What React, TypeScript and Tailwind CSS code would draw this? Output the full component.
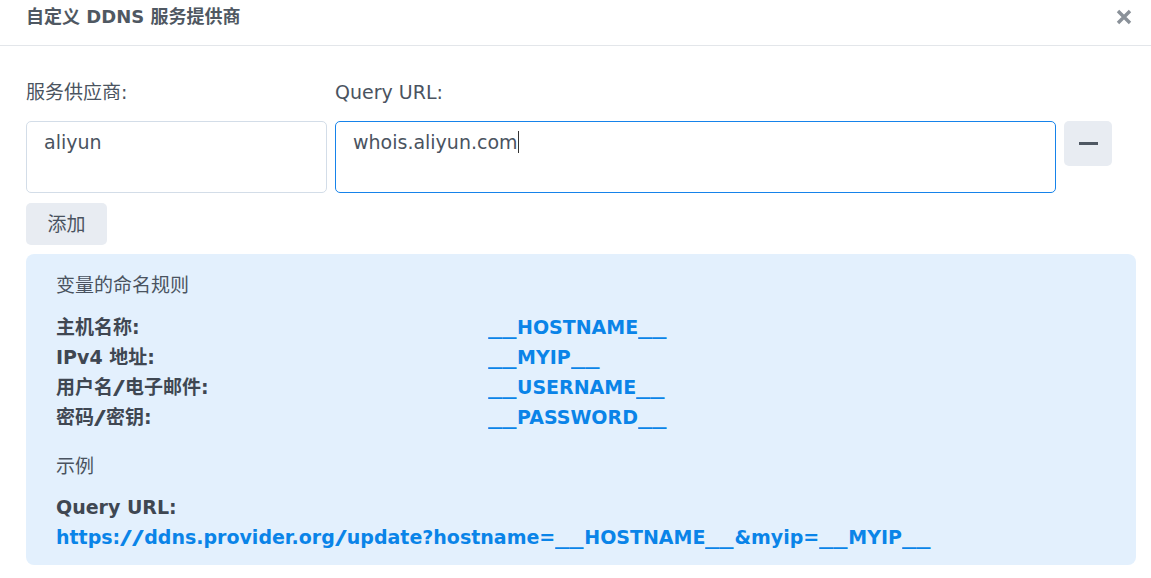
import { Fragment } from 'react';

const font = { fontFamily: '"DejaVu Sans", "Noto Sans CJK SC", sans-serif' };

const vars = [
  { label: '主机名称:', value: '__HOSTNAME__' },
  { label: 'IPv4 地址:', value: '__MYIP__' },
  { label: '用户名/电子邮件:', value: '__USERNAME__' },
  { label: '密码/密钥:', value: '__PASSWORD__' },
];

// the reference font has wide underscores and slashes, widen them to keep the line lengths
function Wide({ text }: { text: string }) {
  const parts = text.split(/(__|\/)/);
  return (
    <>
      {parts.map((p, i) => {
        if (p === '__')
          return (
            <span key={i} className="inline-block w-[29px]">
              <span className="inline-block origin-left scale-x-150">__</span>
            </span>
          );
        if (p === '/')
          return (
            <span key={i} className="inline-block w-[12px]">
              <span className="inline-block origin-left scale-x-[1.7]">/</span>
            </span>
          );
        return <Fragment key={i}>{p}</Fragment>;
      })}
    </>
  );
}

export default function App() {
  return (
    <div className="w-[1151px] h-[578px] bg-white text-[#4a5360] overflow-hidden" style={font}>
      <div className="h-[46px] border-b border-[#e3e6ea] pl-[26px] pr-[19px] pt-[5px] flex items-start justify-between">
        <div className="text-[18px] font-bold leading-[24px] text-[#4f5862]">自定义 DDNS 服务提供商</div>
        <button className="mt-[4px] text-[#8a9199]">
          <svg width="16" height="16" viewBox="0 0 16 16">
            <path d="M2 2 L14 14 M14 2 L2 14" stroke="currentColor" strokeWidth="3.4" strokeLinecap="butt" />
          </svg>
        </button>
      </div>

      <div className="px-[26px]">
        <div className="flex mt-[33px] text-[19px] leading-[26px]">
          <div className="w-[309px]">服务供应商:</div>
          <div>Query URL:</div>
        </div>

        <div className="flex mt-[16px] gap-[8px] text-[19px] leading-[26px]">
          <div className="w-[301px] h-[72px] border border-[#d3dde8] rounded-[5px] pl-[17px] pt-[7px]">aliyun</div>
          <div className="w-[721px] h-[72px] border border-[#1683ea] rounded-[5px] pl-[17px] pt-[7px] flex items-start">
            <span>whois.aliyun.com</span>
            <span className="inline-block w-px h-[22px] bg-[#333] mt-[2px]" />
          </div>
          <button className="w-[48px] h-[45px] rounded-[5px] bg-[#e8ecf2] flex items-center justify-center">
            <span className="block w-[19px] h-[3px] bg-[#4f5863]" />
          </button>
        </div>

        <button className="block mt-[10px] h-[42px] w-[81px] rounded-[5px] bg-[#e8ecf2] text-[19px] leading-[26px] text-[#4a5360]">
          添加
        </button>

        <div className="mt-[9px] w-[1110px] h-[311px] rounded-[8px] bg-[#e3f0fd] pl-[30px] pt-[16px] text-[19px] leading-[30px]">
          <div className="text-[#4a5360]">变量的命名规则</div>
          <div className="mt-[12px]">
            {vars.map((v) => (
              <div key={v.value} className="flex font-bold">
                <div className="w-[432px] text-[#3f4752]">
                  <Wide text={v.label} />
                </div>
                <div className="text-[#0a84e8]">
                  <Wide text={v.value} />
                </div>
              </div>
            ))}
          </div>
          <div className="mt-[19px]">示例</div>
          <div className="mt-[11px] font-bold text-[#3f4752]">Query URL:</div>
          <div className="font-bold text-[#0a84e8]">
            <Wide text="https://ddns.provider.org/update?hostname=__HOSTNAME__&myip=__MYIP__" />
          </div>
        </div>
      </div>
    </div>
  );
}
